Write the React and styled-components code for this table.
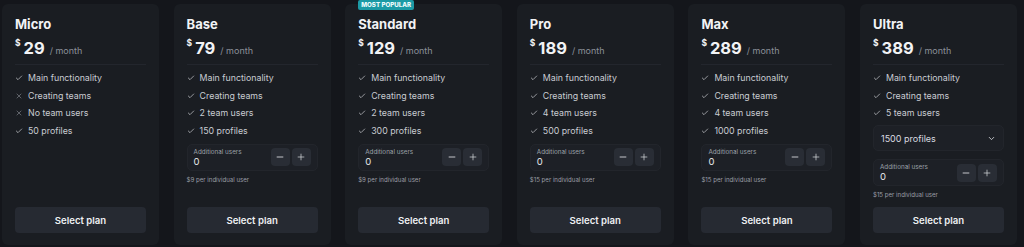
import React from "react";
import styled, { createGlobalStyle } from "styled-components";
import { Check, X, ChevronDown, Minus, Plus } from "lucide-react";

const GlobalStyle = createGlobalStyle`
  html, body {
    margin: 0;
    padding: 0;
    background: #14161b;
    font-family: Inter, "Noto Sans", sans-serif;
    color: #f2f3f5;
  }
`;

const Row = styled.div`
  display: flex;
  gap: 14.6px;
  padding: 4px 7px 2px 2px;
  height: 247px;
  box-sizing: border-box;
`;

const Card = styled.div`
  position: relative;
  flex: 1;
  display: flex;
  flex-direction: column;
  background: #1a1d22;
  border-radius: 6px;
  padding: 11px 13px 12px 13px;
  box-sizing: border-box;
`;

const Badge = styled.div`
  position: absolute;
  top: -4px;
  left: 13px;
  background: #1c9aa5;
  color: #eefcfd;
  font-size: 6.2px;
  font-weight: 800;
  line-height: 10px;
  padding: 0 3px;
  border-radius: 2px;
`;

const Title = styled.div`
  font-size: 13px;
  font-weight: 700;
  line-height: 18px;
`;

const Price = styled.div`
  display: flex;
  align-items: baseline;
  margin-top: 4px;
  line-height: 22px;
  padding-bottom: 2px;
  border-bottom: 1px solid #23262d;
  margin-bottom: 4px;
`;

const Currency = styled.span`
  font-size: 8.5px;
  font-weight: 700;
  align-self: flex-start;
  line-height: 13px;
  margin-right: 3px;
`;

const Amount = styled.span`
  font-size: 16.5px;
  font-weight: 700;
`;

const Period = styled.span`
  font-size: 9px;
  color: #8b9099;
  margin-left: 5px;
`;

const Features = styled.ul`
  list-style: none;
  margin: 0;
  padding: 0;
`;

const Feature = styled.li`
  display: flex;
  align-items: center;
  gap: 5px;
  font-size: 8.8px;
  line-height: 17.7px;
  color: #c9ccd2;
  svg {
    flex: none;
    color: ${(p) => (p.$off ? "#9a9ea6" : "#d6d8dc")};
  }
`;

const Select = styled.div`
  display: flex;
  align-items: center;
  justify-content: space-between;
  margin-top: 3px;
  height: 26px;
  padding: 0 7px;
  border-radius: 5px;
  background: #1d2026;
  border: 1px solid #22252b;
  font-size: 9px;
  color: #d9dbe0;
  box-sizing: border-box;
`;

const Stepper = styled.div`
  display: flex;
  align-items: center;
  justify-content: space-between;
  margin-top: ${(p) => (p.$after ? "8px" : "4px")};
  height: 27px;
  padding: 0 6px 0 6px;
  border-radius: 5px;
  background: #1d2026;
  border: 1px solid #22252b;
  box-sizing: border-box;
`;

const StepLabel = styled.div`
  display: flex;
  flex-direction: column;
  font-size: 6.3px;
  color: #9ca0a8;
  line-height: 8px;
  strong {
    font-weight: 400;
    font-size: 9.5px;
    line-height: 11px;
    color: #e6e8eb;
  }
`;

const StepButtons = styled.div`
  display: flex;
  gap: 2px;
`;

const StepButton = styled.button`
  width: 19px;
  height: 18px;
  display: flex;
  align-items: center;
  justify-content: center;
  border: none;
  padding: 0;
  border-radius: 4px;
  background: #292d35;
  color: #e3e5e8;
`;

const Note = styled.div`
  margin-top: 4px;
  font-size: 6.1px;
  line-height: 9px;
  color: #9a9ea6;
`;

const SelectButton = styled.button`
  margin-top: auto;
  height: 26px;
  border: none;
  border-radius: 4px;
  background: #262a32;
  color: #eef0f2;
  font-family: inherit;
  font-size: 9.6px;
  font-weight: 600;
`;

const plans = [
  {
    name: "Micro",
    price: 29,
    features: [
      ["Main functionality", true],
      ["Creating teams", false],
      ["No team users", false],
      ["50 profiles", true],
    ],
  },
  {
    name: "Base",
    price: 79,
    features: [
      ["Main functionality", true],
      ["Creating teams", true],
      ["2 team users", true],
      ["150 profiles", true],
    ],
    extra: 9,
  },
  {
    name: "Standard",
    price: 129,
    popular: true,
    features: [
      ["Main functionality", true],
      ["Creating teams", true],
      ["2 team users", true],
      ["300 profiles", true],
    ],
    extra: 9,
  },
  {
    name: "Pro",
    price: 189,
    features: [
      ["Main functionality", true],
      ["Creating teams", true],
      ["4 team users", true],
      ["500 profiles", true],
    ],
    extra: 15,
  },
  {
    name: "Max",
    price: 289,
    features: [
      ["Main functionality", true],
      ["Creating teams", true],
      ["4 team users", true],
      ["1000 profiles", true],
    ],
    extra: 15,
  },
  {
    name: "Ultra",
    price: 389,
    features: [
      ["Main functionality", true],
      ["Creating teams", true],
      ["5 team users", true],
    ],
    select: "1500 profiles",
    extra: 15,
  },
];

export default function App() {
  return (
    <>
      <GlobalStyle />
      <Row>
        {plans.map((plan) => (
          <Card key={plan.name}>
            {plan.popular && <Badge>MOST POPULAR</Badge>}
            <Title>{plan.name}</Title>
            <Price>
              <Currency>$</Currency>
              <Amount>{plan.price}</Amount>
              <Period>/ month</Period>
            </Price>
            <Features>
              {plan.features.map(([text, on]) => (
                <Feature key={text} $off={!on}>
                  {on ? (
                    <Check size={8} strokeWidth={2} />
                  ) : (
                    <X size={8} strokeWidth={1.6} />
                  )}
                  {text}
                </Feature>
              ))}
            </Features>
            {plan.select && (
              <Select>
                {plan.select}
                <ChevronDown size={9} strokeWidth={2.2} />
              </Select>
            )}
            {plan.extra && (
              <>
                <Stepper $after={!!plan.select}>
                  <StepLabel>
                    Additional users
                    <strong>0</strong>
                  </StepLabel>
                  <StepButtons>
                    <StepButton>
                      <Minus size={10} strokeWidth={2} />
                    </StepButton>
                    <StepButton>
                      <Plus size={10} strokeWidth={1.6} />
                    </StepButton>
                  </StepButtons>
                </Stepper>
                <Note>${plan.extra} per individual user</Note>
              </>
            )}
            <SelectButton>Select plan</SelectButton>
          </Card>
        ))}
      </Row>
    </>
  );
}
